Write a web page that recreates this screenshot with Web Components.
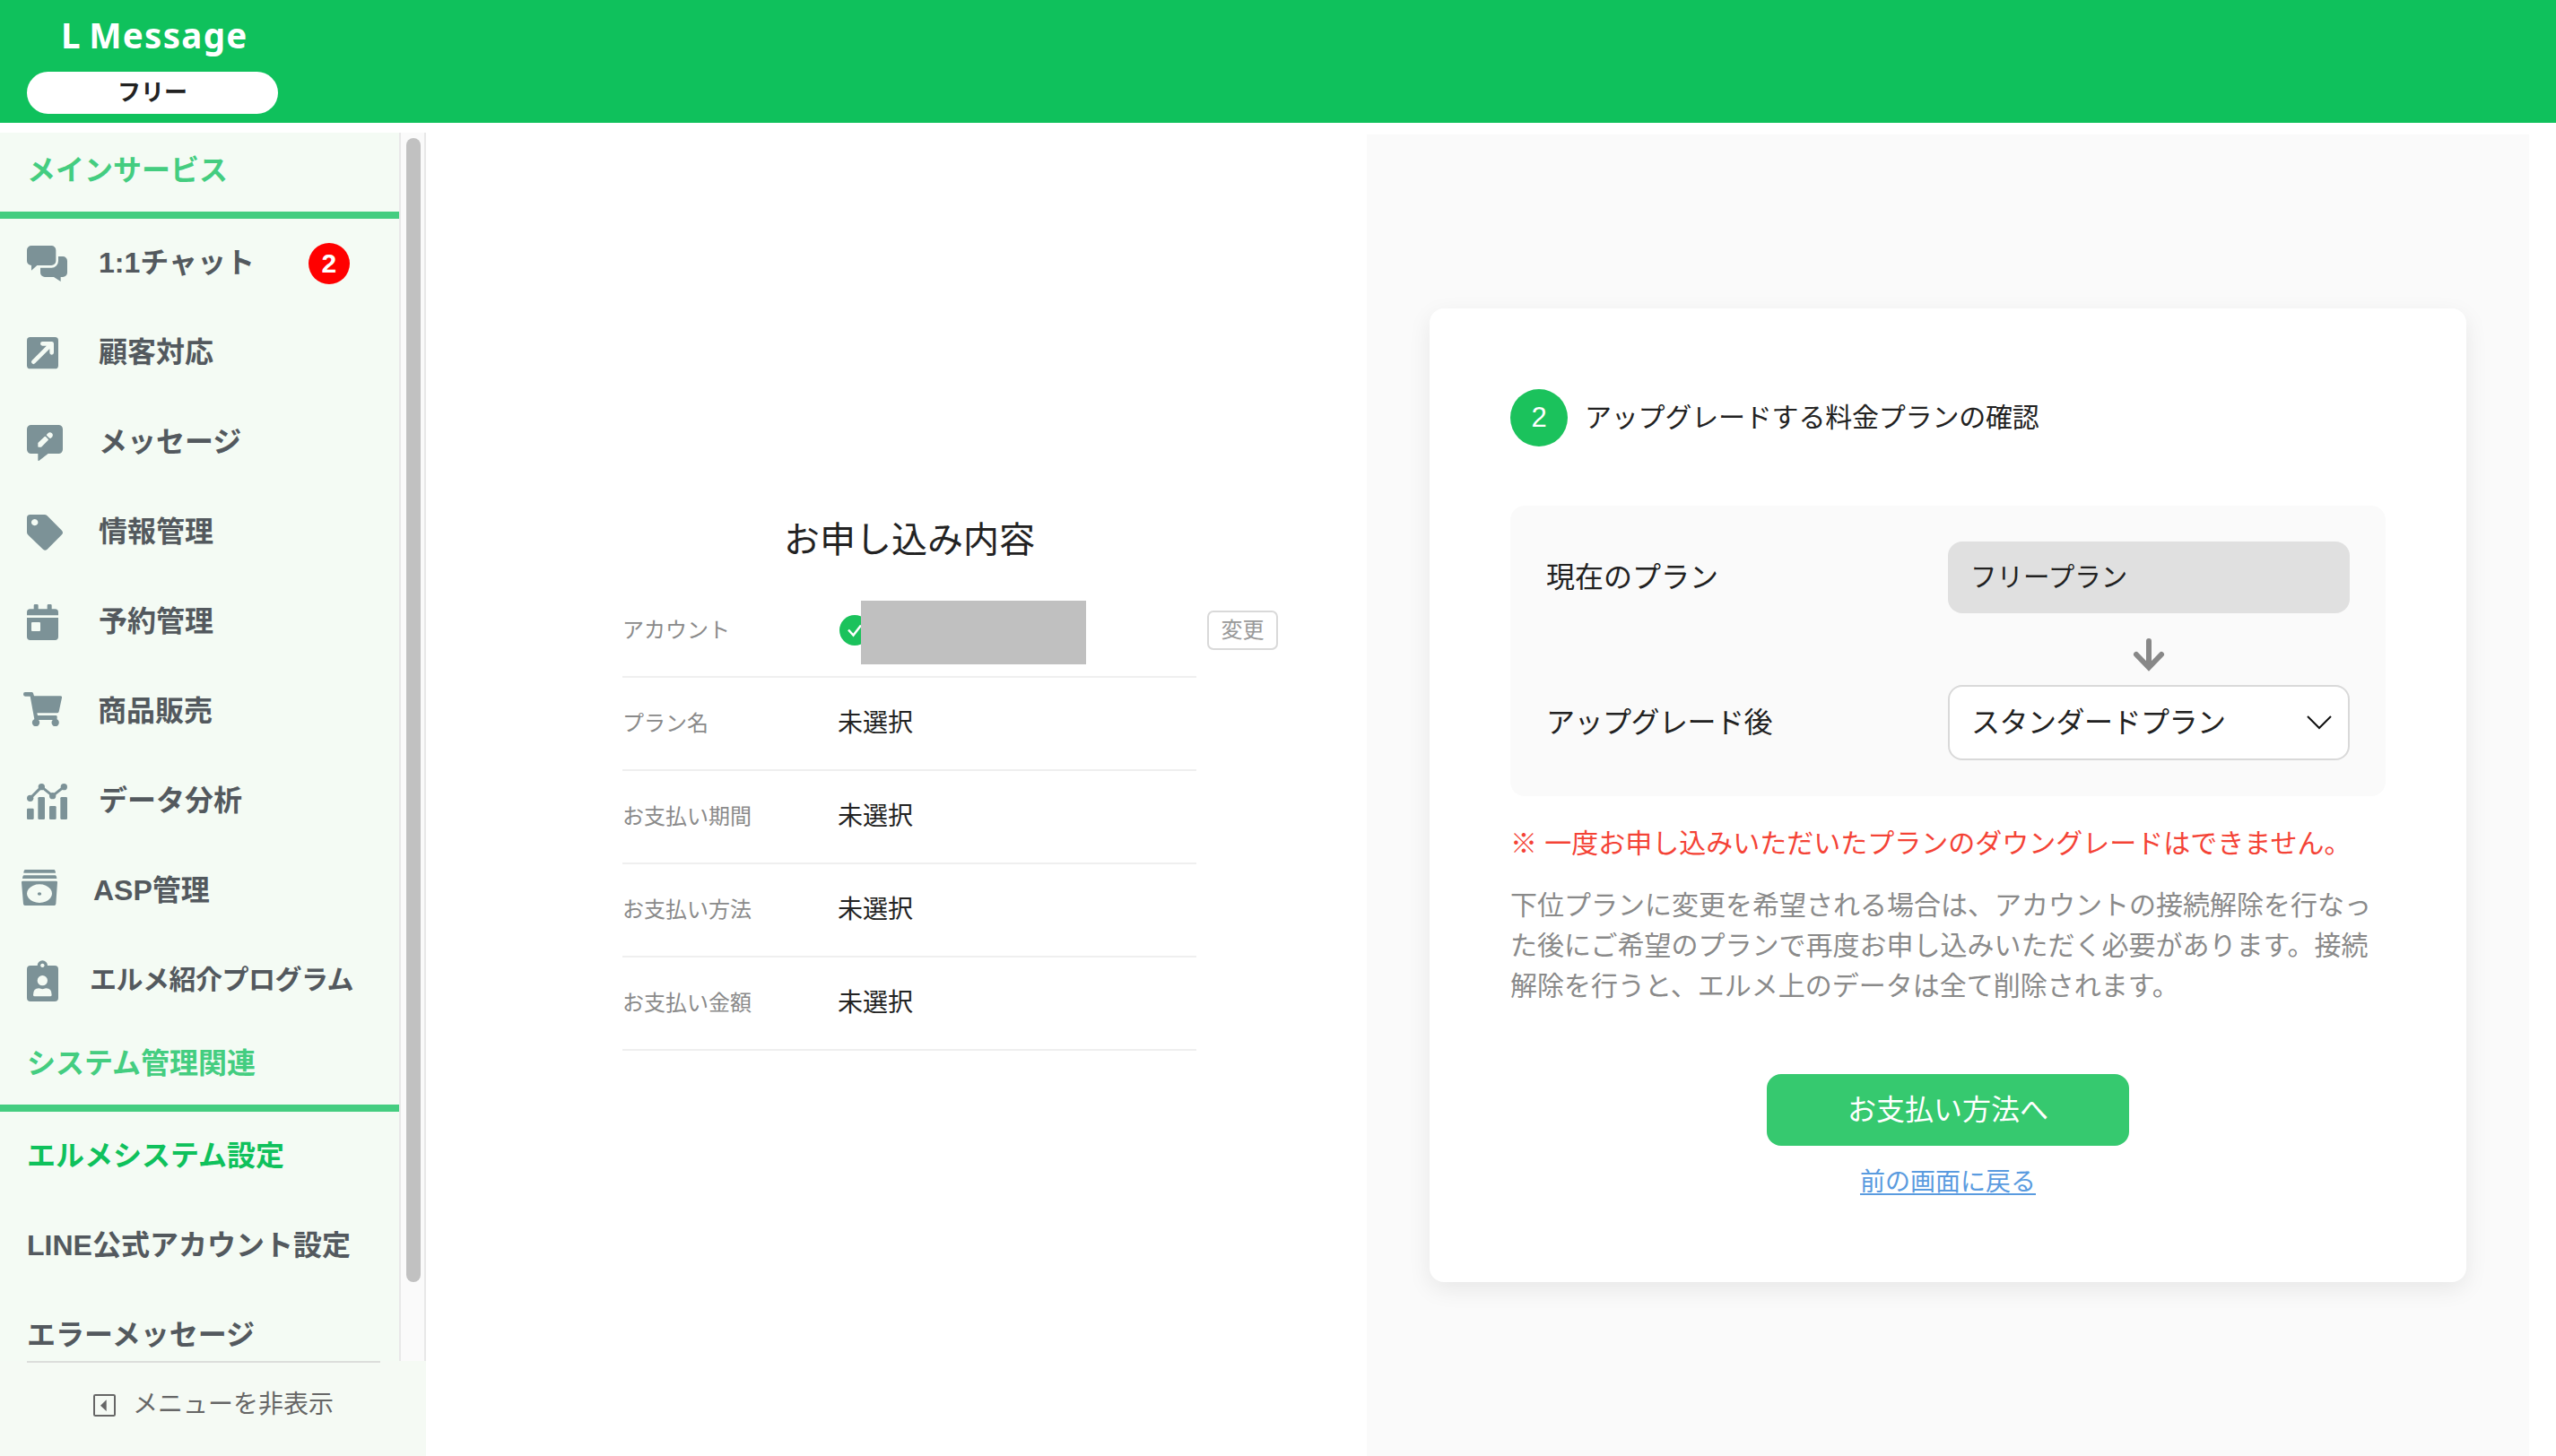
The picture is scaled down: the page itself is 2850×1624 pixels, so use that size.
<!DOCTYPE html>
<html lang="ja">
<head>
<meta charset="utf-8">
<title>L Message</title>
<style>
html,body{margin:0;height:100%}
body{background:#fff;color:#222;font-family:"Liberation Sans","Noto Sans CJK JP",sans-serif;overflow:hidden}
</style>
</head>
<body>
<lm-app></lm-app>
<script>
const define = (name, html) => {
  const t = document.createElement('template');
  t.innerHTML = html;
  customElements.define(name, class extends HTMLElement {
    constructor() {
      super();
      this.attachShadow({ mode: 'open' }).append(t.content.cloneNode(true));
    }
  });
};

const ICONS = {
  chat: [90, 822, 135, 120, '<path d="M135 858H210a15 15 0 0 1 15 15V912a15 15 0 0 1-15 15H203V942L180 927H150a15 15 0 0 1-15-15z"/><path d="M105 822H172a15 15 0 0 1 15 15V873a15 15 0 0 1-15 15H124L105 905V888a15 15 0 0 1-15-15V837a15 15 0 0 1 15-15z" stroke="#f4fbf4" stroke-width="16"/><path d="M105 822H172a15 15 0 0 1 15 15V873a15 15 0 0 1-15 15H124L105 905V888a15 15 0 0 1-15-15V837a15 15 0 0 1 15-15z"/>'],
  arrow: [90, 109, 105, 106, '<rect x="90" y="109" width="105" height="106" rx="11"/><path d="M112 192L171 133M142 131H173V161" fill="none" stroke="#f4fbf4" stroke-width="14" stroke-linecap="round" stroke-linejoin="round"/>'],
  message: [90, 402, 120, 120, '<path d="M104 402H196a14 14 0 0 1 14 14V484a14 14 0 0 1-14 14H161L131 521Q127 523 127 519V498H104a14 14 0 0 1-14-14V416a14 14 0 0 1 14-14z"/><path d="M127 462L149 441Q151 439 153 441L161 449Q163 451 161 453L138 476H129Q127 476 127 474zM156 434L162 428Q168 424 174 430Q180 436 175 442L169 447Q166 447 163 444L157 438Q155 436 156 434z" fill="#f4fbf4"/>'],
  tag: [90, 702, 120, 120, '<path fill-rule="evenodd" d="M101 702H148Q154 702 158 706L207 755Q213 762 207 769L158 818Q151 824 144 818L95 771Q90 767 90 761V713a11 11 0 0 1 11-11zM116 717a11 11 0 1 0 .1 0z"/>'],
  calendar: [90, 42, 105, 120, '<path fill-rule="evenodd" d="M113 58V46q0-4 4-4h7q4 0 4 4V58H158V46q0-4 4-4h7q4 0 4 4V58H184a11 11 0 0 1 11 11V79H90V69a11 11 0 0 1 11-11zM90 87H195V151a11 11 0 0 1-11 11H101a11 11 0 0 1-11-11zM108 102q-3 0-3 3V129q0 3 3 3H132q3 0 3-3V105q0-3-3-3z"/>'],
  cart: [78, 335, 129, 115, '<path d="M84 335H106q4 0 5 4L114 348H202q6 0 5 6L197 400q-1 5-6 5H124L126 413H187q4 0 4 4v6q0 5-5 5H124L115 426L101 349H84q-6 0-6-7t6-7z"/><circle cx="120" cy="437" r="12.5"/><circle cx="185" cy="437" r="12.5"/>'],
  chart: [90, 642, 135, 120, '<path d="M101 691L139 653L176 683L214 653" fill="none" stroke="#7c9297" stroke-width="9"/><circle cx="101" cy="691" r="11"/><circle cx="139" cy="653" r="11"/><circle cx="176" cy="683" r="11"/><circle cx="214" cy="653" r="11"/><rect x="90" y="725" width="23" height="37" rx="4"/><rect x="127" y="687" width="23" height="75" rx="4"/><rect x="165" y="717" width="23" height="45" rx="4"/><rect x="202" y="687" width="23" height="75" rx="4"/>'],
  money: [72, 930, 120, 120, '<path d="M84 930H181q4 0 5 11H79q1-11 5-11zM80 949H185q4 0 5 11H75q1-11 5-11z"/><path fill-rule="evenodd" d="M76 968H188q4 0 4 4L187 1045q-1 5-5 5H83q-4 0-5-5L72 972q0-4 4-4zM132 979a42 31 0 1 0 .1 0z"/><ellipse cx="132" cy="1011" rx="6.500" ry="5"/>'],
  badge: [90, 272, 105, 138, '<path fill-rule="evenodd" d="M102 290H125a17 17 0 0 1 34 0H183a12 12 0 0 1 12 12V398a12 12 0 0 1-12 12H102a12 12 0 0 1-12-12V302a12 12 0 0 1 12-12zM142 283a6.500 6.500 0 1 0 .1 0z"/><circle cx="142" cy="340" r="17" fill="#f4fbf4"/><path d="M111 388Q111 366 130 366Q142 371 154 366Q173 366 173 388Q173 393 168 393H116Q111 393 111 388z" fill="#f4fbf4"/>']
};

customElements.define('lm-icon', class extends HTMLElement {
  connectedCallback() {
    const [x, y, w, h, art] = ICONS[this.getAttribute('name')];
    const root = this.shadowRoot || this.attachShadow({ mode: 'open' });
    root.innerHTML = `<style>:host{display:block;flex:none}svg{display:block;fill:#7c9297}</style>
      <svg width="${w / 3}" height="${h / 3}" viewBox="${x} ${y} ${w} ${h}">${art}</svg>`;
  }
});

define('lm-header', `<style>
:host{display:flex;flex-direction:column;box-sizing:border-box;height:137px;padding:9px 30px 10px;background:#0fc15c;align-items:flex-start;justify-content:space-between;flex:none}
.logo{font:bold 38.5px/60px "Noto Sans",sans-serif;height:60px;padding-left:38px;color:#fff;letter-spacing:1.3px;word-spacing:-3px;white-space:pre}
.plan{width:280px;height:47px;border-radius:24px;background:#fff;color:#222;font-weight:bold;font-size:26px;line-height:47px;text-align:center}
</style><div class="logo">L Message</div><div class="plan"><slot></slot></div>`);

define('lm-nav-heading', `<style>
:host{display:block;box-sizing:border-box;height:96px;flex:none;padding-left:30px;border-bottom:8px solid #44cd80;color:#44cd80;font-weight:bold;font-size:32px;line-height:85px}
</style><slot></slot>`);

define('lm-nav-item', `<style>
:host{display:flex;align-items:center;height:100px;flex:none;padding-left:30px;color:#53595e;font-weight:bold;font-size:32px;line-height:48px;white-space:nowrap}
:host([active]){color:#0fc15c}
.cell{width:80px;flex:none}
.name{padding-bottom:2px}
:host(.text) .cell{display:none}
:host(.text) .name{padding-bottom:3px}
:host(.cart){padding-left:26px}:host(.cart) .cell{width:83px;padding-bottom:6px}
:host(.asp){padding-left:24px}:host(.asp) .cell{width:80px;padding-bottom:8px}
:host(.program){font-size:30px;letter-spacing:-.5px}:host(.program) .cell{width:70px}
</style><div class="cell"><slot name="icon"></slot></div><span class="name"><slot></slot></span><slot name="badge"></slot>`);

define('lm-count', `<style>
:host{display:block;width:46px;height:46px;margin-left:60px;border-radius:50%;background:#f00;color:#fff;font-size:30px;line-height:46px;text-align:center}
</style><slot></slot>`);

define('lm-sidebar', `<style>
:host{display:flex;flex-direction:column;width:475px;flex:none;margin-top:11px}
.scroll{display:flex;height:1370px;flex:none}
nav{display:flex;flex-direction:column;width:445px;background:#f4fbf4;overflow:hidden}
.track{box-sizing:border-box;width:30px;padding:6px 4px 0 6px;background:#fafafa;border:solid #e8e8e8;border-width:0 2px}
.thumb{width:16px;height:1276px;border-radius:8px;background:#c1c1c1}
.foot{flex:1;background:#f5faf4;padding:0 51px 0 30px}
.hide{display:flex;align-items:center;gap:19px;border-top:2px solid #dcdedb;padding-left:74px;height:95px;color:#666;font-size:28px;line-height:42px;white-space:nowrap}
.hide span{display:block;padding-bottom:2px}
svg{display:block;flex:none}
</style>
<div class="scroll"><nav><slot></slot></nav><div class="track"><div class="thumb"></div></div></div>
<div class="foot"><div class="hide"><svg width="25" height="25" viewBox="312 765 75 75"><rect x="315" y="768" width="69" height="69" rx="4" fill="none" stroke="#666" stroke-width="6"/><path d="M336 803L356 784V822z" fill="#666"/></svg><span><slot name="footer"></slot></span></div></div>`);

define('lm-row', `<style>
:host{display:flex;align-items:center;box-sizing:border-box;width:640px;height:104px;border-bottom:2px solid #efefef}
.label{width:240px;flex:none;color:#8a8a8a;font-size:24px;line-height:36px}
.value{display:flex;align-items:center;font-size:28px;line-height:42px;white-space:nowrap}
</style><div class="label"><slot name="label"></slot></div><div class="value"><slot></slot></div>`);

define('lm-account', `<style>
:host{display:flex;align-items:center;height:72px}
svg{display:block;margin-left:2px;flex:none}
.mask{width:251px;height:71px;background:#c0c0c0;margin:5px 0 0 -10px;z-index:1}
.change{box-sizing:border-box;width:79px;height:44px;margin-left:135px;border:2px solid #d9d9d9;border-radius:7px;color:#999;font-size:24px;line-height:39px;text-align:center;flex:none}
</style><svg width="34" height="34" viewBox="0 0 34 34"><circle cx="17" cy="17" r="17" fill="#1bc25c"/><path d="M10 16.500l5.500 6L24 11.500" fill="none" stroke="#fff" stroke-width="2.500"/></svg><div class="mask"></div><div class="change"><slot></slot></div>`);

define('lm-summary', `<style>
:host{display:flex;flex-direction:column;box-sizing:border-box;width:1049px;flex:none;padding:435px 190px 0 219px}
h2{margin:0 0 20px;width:640px;height:60px;font-weight:normal;font-size:40px;line-height:60px;text-align:center}
</style><h2><slot name="title"></slot></h2><slot></slot>`);

define('lm-step', `<style>
:host{display:flex;align-items:center;gap:19px;height:64px;font-size:30px;line-height:44px;letter-spacing:-.2px}
.n{width:64px;height:64px;border-radius:50%;background:#1bc25c;color:#fff;font-size:31px;line-height:64px;text-align:center}
</style><div class="n"><slot name="number"></slot></div><span><slot></slot></span>`);

define('lm-plan-change', `<style>
:host{display:block;box-sizing:border-box;height:324px;margin-top:66px;padding:40px;border-radius:16px;background:#fafafa;font-size:32px}
.line{display:flex;justify-content:space-between;align-items:center;line-height:48px}
.line.to{letter-spacing:-.5px}
.field{display:flex;align-items:center;justify-content:space-between;box-sizing:border-box;width:448px;border-radius:16px}
.current{height:80px;padding:0 25px;background:#e0e0e0;font-size:29.5px}
.next{height:84px;padding:0 18px 0 24px;background:#fff;border:2px solid #d9d9d9}
.arrow{display:flex;justify-content:center;align-items:center;width:448px;height:80px;margin-left:auto;padding-top:11px;box-sizing:border-box}
svg{display:block}
</style>
<div class="line"><span><slot name="current-label"></slot></span><div class="field current"><slot name="current"></slot></div></div>
<div class="arrow"><svg width="36" height="40" viewBox="0 0 36 40"><path d="M18 5V34M4 20L18 34.500L32 20" fill="none" stroke="#888" stroke-width="6" stroke-linecap="round"/></svg></div>
<div class="line to"><span><slot name="next-label"></slot></span><div class="field next"><span><slot name="next"></slot></span><svg width="28" height="18" viewBox="0 0 28 18"><path d="M1 2L14 15L27 2" fill="none" stroke="#111" stroke-width="2"/></svg></div></div>`);

define('lm-card', `<style>
:host{display:flex;flex-direction:column;box-sizing:border-box;width:1156px;height:1086px;padding:90px;border-radius:16px;background:#fff;box-shadow:0 8px 26px rgba(0,0,0,.08)}
.warn{margin-top:30px;color:#f44336;font-size:30px;line-height:46px;white-space:nowrap}
.info{margin-top:23px;color:#8a8a8a;font-size:30px;line-height:45px}
.btn{align-self:center;width:404px;height:80px;margin-top:76px;border-radius:16px;background:#36c96f;color:#fff;font-size:32px;line-height:80px;text-align:center}
.back{align-self:center;margin-top:20px;color:#5a9bdf;font-size:28px;line-height:42px;text-decoration:underline;text-decoration-thickness:2px;text-underline-offset:3px}
</style><slot></slot><div class="warn"><slot name="warn"></slot></div><div class="info"><slot name="info"></slot></div><div class="btn"><slot name="action"></slot></div><a class="back"><slot name="back"></slot></a>`);

define('lm-upgrade', `<style>
:host{display:block;box-sizing:border-box;width:1296px;flex:none;margin-top:13px;padding:194px 70px 0;background:#fafafa}
</style><slot></slot>`);

define('lm-app', `<style>
:host{display:flex;flex-direction:column;width:2850px;height:1624px;overflow:hidden}
main{display:flex;flex:1;min-height:0}
</style>
<lm-header>フリー</lm-header>
<main>
<lm-sidebar>
<lm-nav-heading>メインサービス</lm-nav-heading>
<lm-nav-item><lm-icon slot="icon" name="chat"></lm-icon>1:1チャット<lm-count slot="badge">2</lm-count></lm-nav-item>
<lm-nav-item><lm-icon slot="icon" name="arrow"></lm-icon>顧客対応</lm-nav-item>
<lm-nav-item><lm-icon slot="icon" name="message"></lm-icon>メッセージ</lm-nav-item>
<lm-nav-item><lm-icon slot="icon" name="tag"></lm-icon>情報管理</lm-nav-item>
<lm-nav-item><lm-icon slot="icon" name="calendar"></lm-icon>予約管理</lm-nav-item>
<lm-nav-item class="cart"><lm-icon slot="icon" name="cart"></lm-icon>商品販売</lm-nav-item>
<lm-nav-item><lm-icon slot="icon" name="chart"></lm-icon>データ分析</lm-nav-item>
<lm-nav-item class="asp"><lm-icon slot="icon" name="money"></lm-icon>ASP管理</lm-nav-item>
<lm-nav-item class="program"><lm-icon slot="icon" name="badge"></lm-icon>エルメ紹介プログラム</lm-nav-item>
<lm-nav-heading>システム管理関連</lm-nav-heading>
<lm-nav-item class="text" active>エルメシステム設定</lm-nav-item>
<lm-nav-item class="text">LINE公式アカウント設定</lm-nav-item>
<lm-nav-item class="text">エラーメッセージ</lm-nav-item>
<span slot="footer">メニューを非表示</span>
</lm-sidebar>
<lm-summary>
<span slot="title">お申し込み内容</span>
<lm-row><span slot="label">アカウント</span><lm-account>変更</lm-account></lm-row>
<lm-row><span slot="label">プラン名</span>未選択</lm-row>
<lm-row><span slot="label">お支払い期間</span>未選択</lm-row>
<lm-row><span slot="label">お支払い方法</span>未選択</lm-row>
<lm-row><span slot="label">お支払い金額</span>未選択</lm-row>
</lm-summary>
<lm-upgrade>
<lm-card>
<lm-step><span slot="number">2</span>アップグレードする料金プランの確認</lm-step>
<lm-plan-change><span slot="current-label">現在のプラン</span><span slot="current">フリープラン</span><span slot="next-label">アップグレード後</span><span slot="next">スタンダードプラン</span></lm-plan-change>
<span slot="warn">※ 一度お申し込みいただいたプランのダウングレードはできません。</span>
<span slot="info">下位プランに変更を希望される場合は、アカウントの接続解除を行なった後にご希望のプランで再度お申し込みいただく必要があります。接続解除を行うと、エルメ上のデータは全て削除されます。</span>
<span slot="action">お支払い方法へ</span>
<span slot="back">前の画面に戻る</span>
</lm-card>
</lm-upgrade>
</main>`);
</script>
</body>
</html>
